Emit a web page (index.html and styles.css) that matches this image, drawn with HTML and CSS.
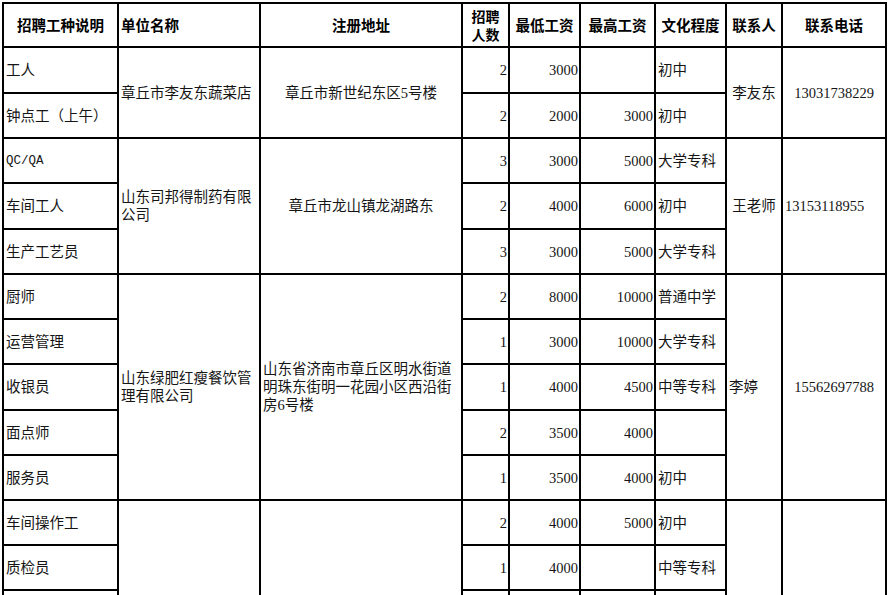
FILE: index.html
```html
<!DOCTYPE html>
<html lang="zh-CN">
<head>
<meta charset="utf-8">
<title>招聘信息</title>
<link rel="stylesheet" href="styles.css">
</head>
<body>
<table class="grid">
  <colgroup>
    <col class="w-job"><col class="w-company"><col class="w-addr"><col class="w-num"><col class="w-min"><col class="w-max"><col class="w-edu"><col class="w-person"><col class="w-phone">
  </colgroup>
  <thead>
    <tr class="r-head">
      <th>招聘工种说明</th>
      <th class="ta-left">单位名称</th>
      <th>注册地址</th>
      <th class="two-line">招聘<br>人数</th>
      <th>最低工资</th>
      <th>最高工资</th>
      <th>文化程度</th>
      <th>联系人</th>
      <th>联系电话</th>
    </tr>
  </thead>
  <tbody>
    <tr class="r46">
      <td class="ta-left">工人</td>
      <td rowspan="2" class="ta-left">章丘市李友东蔬菜店</td>
      <td rowspan="2" class="ta-center">章丘市新世纪东区5号楼</td>
      <td class="num">2</td><td class="num">3000</td><td class="num"></td><td class="ta-left">初中</td>
      <td rowspan="2" class="ta-center">李友东</td>
      <td rowspan="2" class="ta-center">13031738229</td>
    </tr>
    <tr class="r45">
      <td class="ta-left">钟点工（上午）</td>
      <td class="num">2</td><td class="num">2000</td><td class="num">3000</td><td class="ta-left">初中</td>
    </tr>
    <tr class="r45">
      <td class="ta-left mono">QC/QA</td>
      <td rowspan="3" class="ta-left">山东司邦得制药有限公司</td>
      <td rowspan="3" class="ta-center">章丘市龙山镇龙湖路东</td>
      <td class="num">3</td><td class="num">3000</td><td class="num">5000</td><td class="ta-left">大学专科</td>
      <td rowspan="3" class="ta-center">王老师</td>
      <td rowspan="3" class="ta-left">13153118955</td>
    </tr>
    <tr class="r46">
      <td class="ta-left">车间工人</td>
      <td class="num">2</td><td class="num">4000</td><td class="num">6000</td><td class="ta-left">初中</td>
    </tr>
    <tr class="r45">
      <td class="ta-left">生产工艺员</td>
      <td class="num">3</td><td class="num">3000</td><td class="num">5000</td><td class="ta-left">大学专科</td>
    </tr>
    <tr class="r45">
      <td class="ta-left">厨师</td>
      <td rowspan="5" class="ta-left">山东绿肥红瘦餐饮管理有限公司</td>
      <td rowspan="5" class="ta-left">山东省济南市章丘区明水街道明珠东街明一花园小区西沿街房6号楼</td>
      <td class="num">2</td><td class="num">8000</td><td class="num">10000</td><td class="ta-left">普通中学</td>
      <td rowspan="5" class="ta-left">李婷</td>
      <td rowspan="5" class="ta-center">15562697788</td>
    </tr>
    <tr class="r45">
      <td class="ta-left">运营管理</td>
      <td class="num">1</td><td class="num">3000</td><td class="num">10000</td><td class="ta-left">大学专科</td>
    </tr>
    <tr class="r46">
      <td class="ta-left">收银员</td>
      <td class="num">1</td><td class="num">4000</td><td class="num">4500</td><td class="ta-left">中等专科</td>
    </tr>
    <tr class="r45">
      <td class="ta-left">面点师</td>
      <td class="num">2</td><td class="num">3500</td><td class="num">4000</td><td class="ta-left"></td>
    </tr>
    <tr class="r45">
      <td class="ta-left">服务员</td>
      <td class="num">1</td><td class="num">3500</td><td class="num">4000</td><td class="ta-left">初中</td>
    </tr>
    <tr class="r45">
      <td class="ta-left">车间操作工</td>
      <td rowspan="3" class="ta-left"></td>
      <td rowspan="3" class="ta-left"></td>
      <td class="num">2</td><td class="num">4000</td><td class="num">5000</td><td class="ta-left">初中</td>
      <td rowspan="3" class="ta-center"></td>
      <td rowspan="3" class="ta-center"></td>
    </tr>
    <tr class="r45">
      <td class="ta-left">质检员</td>
      <td class="num">1</td><td class="num">4000</td><td class="num"></td><td class="ta-left">中等专科</td>
    </tr>
    <tr class="r45">
      <td class="ta-left"></td>
      <td class="num"></td><td class="num"></td><td class="num"></td><td class="ta-left"></td>
    </tr>
  </tbody>
</table>
</body>
</html>
```

FILE: styles.css
```css
html, body {
  margin: 0;
  padding: 0;
  background: #ffffff;
}

body {
  padding: 2px 0 0 2px;
  font-family: "Liberation Serif", "Noto Sans CJK SC", serif;
  font-size: 14.5px;
  color: #151515;
}

.grid {
  border-collapse: collapse;
  table-layout: fixed;
  width: 885px;
}

.grid th,
.grid td {
  border: 2px solid #000000;
  padding: 0 1px;
  line-height: 18px;
  vertical-align: middle;
  overflow: hidden;
}

.w-job { width: 115px; }
.w-company { width: 142px; }
.w-addr { width: 202px; }
.w-num { width: 47px; }
.w-min { width: 71px; }
.w-max { width: 75px; }
.w-edu { width: 71px; }
.w-person { width: 56px; }
.w-phone { width: 104px; }

.grid th {
  font-family: "Noto Sans CJK SC", sans-serif;
  font-weight: 700;
  font-size: 14.5px;
  color: #000000;
  text-align: center;
}

.grid th.two-line {
  line-height: 18px;
  font-size: 14px;
}

.r-head { height: 44px; }
.r45 { height: 45px; }
.r46 { height: 46px; }

.grid .ta-left { text-align: left; padding-left: 2px; }
.grid .ta-center { text-align: center; }
.grid .num { text-align: right; padding-right: 1px; }
.grid .mono { font-family: "Liberation Mono", monospace; font-size: 12.5px; }
```
